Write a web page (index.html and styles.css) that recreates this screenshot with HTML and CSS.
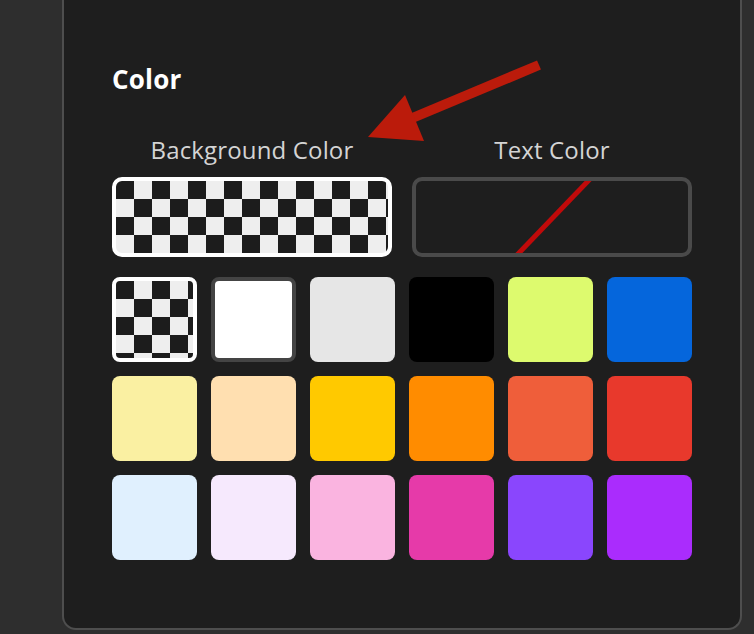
FILE: index.html
```html
<!DOCTYPE html>
<html lang="en">
<head>
<meta charset="utf-8">
<title>Color</title>
<link rel="stylesheet" href="styles.css">
</head>
<body>
<div class="panel">
  <h2 class="title">Color</h2>
  <div class="pickers">
    <div class="picker">
      <div class="picker-label">Background Color</div>
      <div class="preview preview-bg checker"></div>
    </div>
    <div class="picker">
      <div class="picker-label">Text Color</div>
      <div class="preview preview-text">
        <svg class="none-line" width="272" height="72" viewBox="0 0 272 72"><line x1="174" y1="-2" x2="101" y2="74" stroke="#c00a0a" stroke-width="5"/></svg>
      </div>
    </div>
  </div>
  <div class="swatches">
    <div class="swatch checker swatch-selected"></div>
    <div class="swatch swatch-white"></div>
    <div class="swatch" style="background:#e6e6e6"></div>
    <div class="swatch" style="background:#000000"></div>
    <div class="swatch" style="background:#ddfa6e"></div>
    <div class="swatch" style="background:#0566dc"></div>
    <div class="swatch" style="background:#faf0a2"></div>
    <div class="swatch" style="background:#ffdfb0"></div>
    <div class="swatch" style="background:#ffc900"></div>
    <div class="swatch" style="background:#ff8c00"></div>
    <div class="swatch" style="background:#ef5e3a"></div>
    <div class="swatch" style="background:#e8392c"></div>
    <div class="swatch" style="background:#e0f0fe"></div>
    <div class="swatch" style="background:#f6e9fd"></div>
    <div class="swatch" style="background:#fab4e0"></div>
    <div class="swatch" style="background:#e63aa9"></div>
    <div class="swatch" style="background:#8a46fd"></div>
    <div class="swatch" style="background:#aa2cfd"></div>
  </div>
</div>
<svg class="arrow" width="754" height="200" viewBox="0 0 754 200">
  <line x1="539" y1="65" x2="410" y2="119" stroke="#bb1b0b" stroke-width="10"/>
  <polygon points="368,137 405,95 424,141" fill="#bb1b0b"/>
</svg>
</body>
</html>
```
FILE: styles.css
```css
html, body {
  margin: 0;
  padding: 0;
}
body {
  background: #2e2e2e;
  width: 754px;
  height: 634px;
  overflow: hidden;
  position: relative;
  font-family: "Open Sans", "Noto Sans", sans-serif;
}
.panel {
  box-sizing: border-box;
  margin-left: 62px;
  width: 680px;
  height: 630px;
  background: #1e1e1e;
  border: 2px solid #4e4e4e;
  border-top: none;
  border-radius: 0 0 14px 14px;
  padding: 63px 48px 0 48px;
}
.title {
  margin: 0;
  font-size: 26px;
  line-height: 32px;
  font-weight: 700;
  letter-spacing: 0.2px;
  color: #ffffff;
}
.pickers {
  margin-top: 39px;
  display: flex;
  gap: 20px;
}
.picker {
  width: 280px;
  display: flex;
  flex-direction: column;
  align-items: center;
}
.picker-label {
  font-size: 24px;
  line-height: 32px;
  letter-spacing: 0.15px;
  color: #d4d4d4;
  margin-bottom: 11px;
}
.preview {
  box-sizing: border-box;
  width: 280px;
  height: 80px;
  border-radius: 10px;
  border: 4px solid #4a4a4a;
  position: relative;
  overflow: hidden;
}
.checker {
  background: conic-gradient(#eeeeee 0 25%, #1c1c1c 0 50%, #eeeeee 0 75%, #1c1c1c 0) 0 0 / 36px 36px;
}
.preview-bg {
  border-color: #ffffff;
}
.preview-text {
  background: #1e1e1e;
}
.none-line {
  position: absolute;
  left: 0;
  top: 0;
}
.swatches {
  margin-top: 20px;
  display: grid;
  grid-template-columns: repeat(6, 85px);
  grid-auto-rows: 85px;
  gap: 14px;
}
.swatch {
  box-sizing: border-box;
  border-radius: 8px;
}
.swatch-selected {
  border: 4px solid #ffffff;
}
.swatch-white {
  background: #ffffff;
  border: 4px solid #444444;
}
.arrow {
  position: absolute;
  left: 0;
  top: 0;
}
```
